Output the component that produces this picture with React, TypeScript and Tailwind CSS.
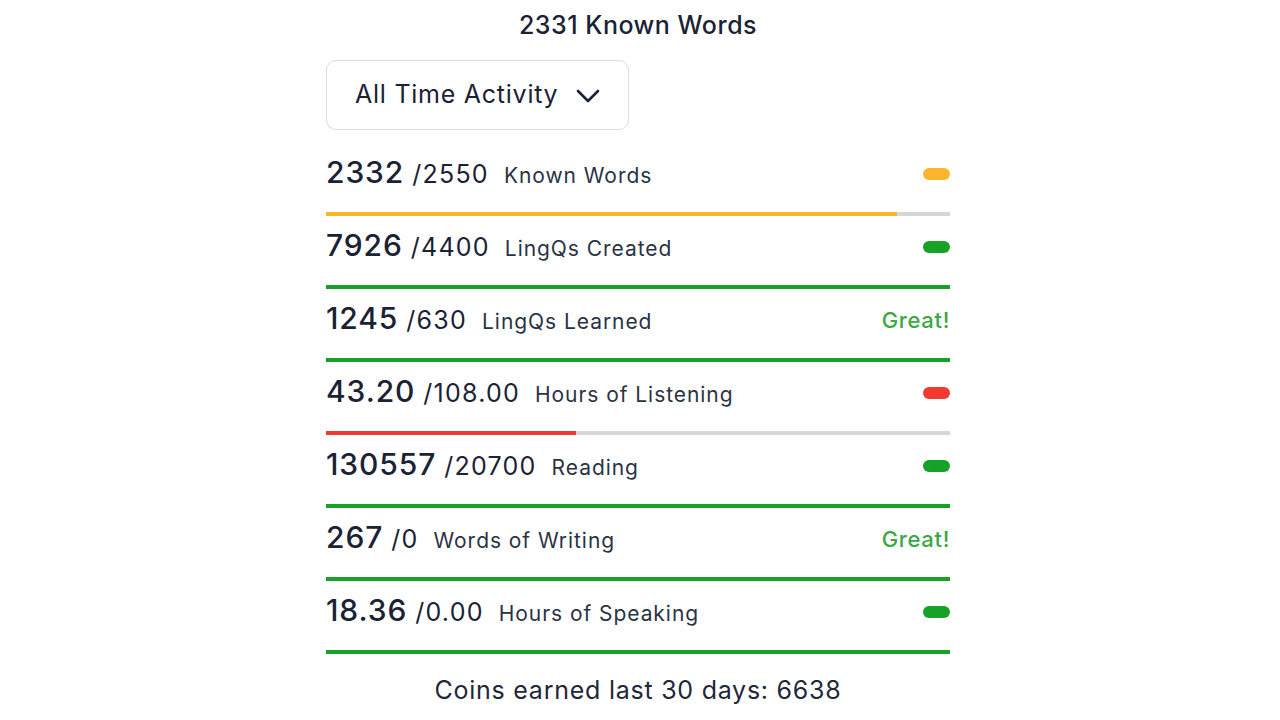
type Stat = {
  value: string;
  goal: string;
  label: string;
  pct: number;
  tone: "orange" | "green" | "red";
  great?: boolean;
};

const stats: Stat[] = [
  { value: "2332", goal: "/2550", label: "Known Words", pct: 91.5, tone: "orange" },
  { value: "7926", goal: "/4400", label: "LingQs Created", pct: 100, tone: "green" },
  { value: "1245", goal: "/630", label: "LingQs Learned", pct: 100, tone: "green", great: true },
  { value: "43.20", goal: "/108.00", label: "Hours of Listening", pct: 40, tone: "red" },
  { value: "130557", goal: "/20700", label: "Reading", pct: 100, tone: "green" },
  { value: "267", goal: "/0", label: "Words of Writing", pct: 100, tone: "green", great: true },
  { value: "18.36", goal: "/0.00", label: "Hours of Speaking", pct: 100, tone: "green" },
];

const barColor = {
  orange: "bg-[#fbb62c]",
  green: "bg-[#16a226]",
  red: "bg-[#f43a30]",
};

function StatRow({ stat }: { stat: Stat }) {
  return (
    <div className="flex flex-col h-[73px]">
      <div className="flex-1 flex items-center justify-between pb-[11px]">
        <div className="flex items-baseline">
          <span className="text-[30px] font-medium tracking-[0.03em] text-[#1a2335]">{stat.value}</span>
          <span className="ml-[8px] text-[25px] tracking-[0.05em] text-[#1a2335]">{stat.goal}</span>
          <span className="ml-[15px] text-[21px] text-[#2a3344] tracking-[0.045em]">{stat.label}</span>
        </div>
        {stat.great ? (
          <span className="mt-[5px] text-[22px] font-medium tracking-[0.03em] text-[#3ba843]">Great!</span>
        ) : (
          <span className={`mt-[3px] w-[27px] h-[12px] rounded-full ${barColor[stat.tone]}`} />
        )}
      </div>
      <div className="h-[4px] bg-[#d6d6d6]">
        <div className={`h-full ${barColor[stat.tone]}`} style={{ width: `${stat.pct}%` }} />
      </div>
    </div>
  );
}

export default function App() {
  return (
    <div className="w-[1280px] h-[720px] bg-white flex font-['Inter',sans-serif] text-[#1a2335] pl-[326px]">
      <div className="w-[624px] flex flex-col">
        <h1 className="text-center text-[25px] font-medium mt-[11px] leading-[28px] tracking-[0.02em]">2331 Known Words</h1>
        <div className="mt-[21px] flex">
          <button className="h-[70px] w-[303px] rounded-[10px] border border-[#dcdcdc] flex items-center pl-[28px] gap-[18px]">
            <span className="text-[25px] tracking-[0.03em] text-[#1a2335]">All Time Activity</span>
            <svg width="24" height="14" viewBox="0 0 24 14" fill="none" className="mt-[2px]">
              <polyline points="2,2 12,12 22,2" stroke="#1a2335" strokeWidth="2.6" strokeLinecap="round" strokeLinejoin="round" />
            </svg>
          </button>
        </div>
        <div className="mt-[13px] flex flex-col">
          {stats.map((s) => (
            <StatRow key={s.label} stat={s} />
          ))}
        </div>
        <p className="text-center text-[25px] tracking-[0.03em] mt-[18px] text-[#1f2838]">Coins earned last 30 days: 6638</p>
      </div>
    </div>
  );
}
